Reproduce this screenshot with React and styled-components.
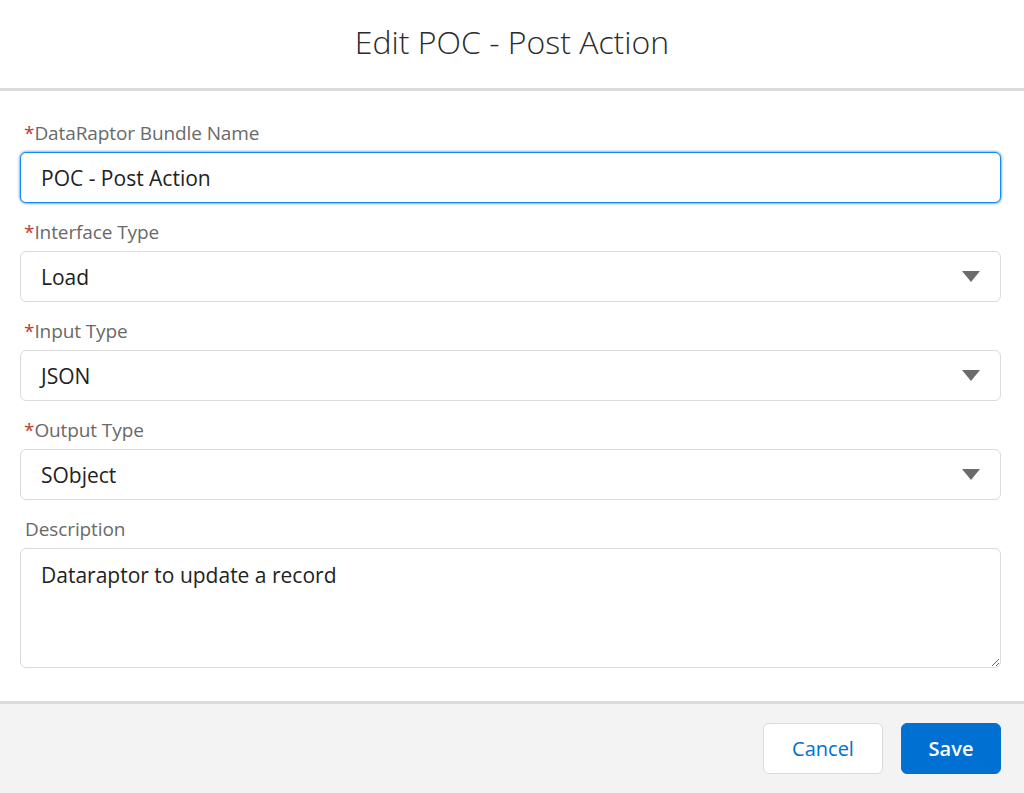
import React from 'react'
import styled, { createGlobalStyle } from 'styled-components'

const GlobalStyle = createGlobalStyle`
  html, body {
    margin: 0;
    padding: 0;
    background: #fff;
  }
  body {
    font-family: 'Open Sans', 'Liberation Sans', sans-serif;
  }
`

const fields = [
  { label: 'DataRaptor Bundle Name', value: 'POC - Post Action', kind: 'input', required: true },
  { label: 'Interface Type', value: 'Load', kind: 'select', required: true },
  { label: 'Input Type', value: 'JSON', kind: 'select', required: true },
  { label: 'Output Type', value: 'SObject', kind: 'select', required: true },
]

const App = () => {
  return (
    <Modal>
      <GlobalStyle />
      <Header>
        <Title>Edit POC - Post Action</Title>
      </Header>
      <Body>
        {fields.map((f) => (
          <Field key={f.label}>
            <Label>
              {f.required && <Star>*</Star>}
              {f.label}
            </Label>
            {f.kind === 'input' ? (
              <TextInput defaultValue={f.value} />
            ) : (
              <SelectBox>
                <span>{f.value}</span>
                <Caret viewBox="0 0 18 12">
                  <path d="M0 0 H18 L9 11 Z" fill="#6b6b6b" />
                </Caret>
              </SelectBox>
            )}
          </Field>
        ))}
        <Field>
          <Label plain>Description</Label>
          <TextArea defaultValue="Dataraptor to update a record" />
        </Field>
      </Body>
      <Footer>
        <Button>Cancel</Button>
        <Button brand>Save</Button>
      </Footer>
    </Modal>
  )
}

const Modal = styled.div`
  width: 1024px;
  height: 793px;
  display: flex;
  flex-direction: column;
  overflow: hidden;
`

const Header = styled.div`
  height: 91px;
  flex-shrink: 0;
  box-sizing: border-box;
  padding-bottom: 6px;
  display: flex;
  align-items: center;
  justify-content: center;
  border-bottom: 3px solid #dcdcdc;
`

const Title = styled.h2`
  margin: 0;
  font-size: 32px;
  font-weight: 300;
  color: #2b2b2b;
`

const Body = styled.div`
  flex: 1;
  padding: 31px 23px 0 20px;
  display: flex;
  flex-direction: column;
  gap: 18px;
`

const Field = styled.div`
  display: flex;
  flex-direction: column;
  gap: 8px;
`

const Label = styled.label`
  display: block;
  height: 22px;
  font-size: 19px;
  line-height: 22px;
  color: #696969;
  letter-spacing: -0.1px;
  padding-left: ${(p) => (p.plain ? '5px' : '4px')};
`

const Star = styled.span`
  color: #c23934;
  margin-right: 0;
`

const TextInput = styled.input`
  box-sizing: border-box;
  height: 51px;
  width: 100%;
  padding: 0 20px;
  font-family: inherit;
  font-size: 21px;
  color: #222;
  border: 1px solid #1589ee;
  border-radius: 6px;
  box-shadow: 0 0 3px #0070d2;
  outline: none;
`

const SelectBox = styled.div`
  box-sizing: border-box;
  height: 51px;
  display: flex;
  align-items: center;
  justify-content: space-between;
  padding: 0 20px;
  font-size: 21px;
  color: #222;
  border: 1px solid #dddbda;
  border-radius: 6px;
`

const Caret = styled.svg`
  width: 18px;
  height: 12px;
`

const TextArea = styled.textarea`
  box-sizing: border-box;
  height: 120px;
  width: 100%;
  padding: 11px 20px;
  font-family: inherit;
  font-size: 21px;
  line-height: 30px;
  color: #222;
  border: 1px solid #dddbda;
  border-radius: 6px;
  resize: vertical;
  outline: none;
`

const Footer = styled.div`
  height: 92px;
  flex-shrink: 0;
  box-sizing: border-box;
  background: #f3f3f3;
  border-top: 3px solid #dcdcdc;
  display: flex;
  align-items: center;
  justify-content: flex-end;
  gap: 18px;
  padding: 0 23px 0 0;
`

const Button = styled.button`
  box-sizing: border-box;
  height: 51px;
  min-width: ${(p) => (p.brand ? '100px' : '120px')};
  padding: 0 24px;
  font-family: inherit;
  font-size: 20px;
  font-weight: ${(p) => (p.brand ? 600 : 400)};
  border-radius: 6px;
  border: 1px solid ${(p) => (p.brand ? '#0070d2' : '#dddbda')};
  background: ${(p) => (p.brand ? '#0070d2' : '#fff')};
  color: ${(p) => (p.brand ? '#fff' : '#0070d2')};
  cursor: pointer;
`

export default App
